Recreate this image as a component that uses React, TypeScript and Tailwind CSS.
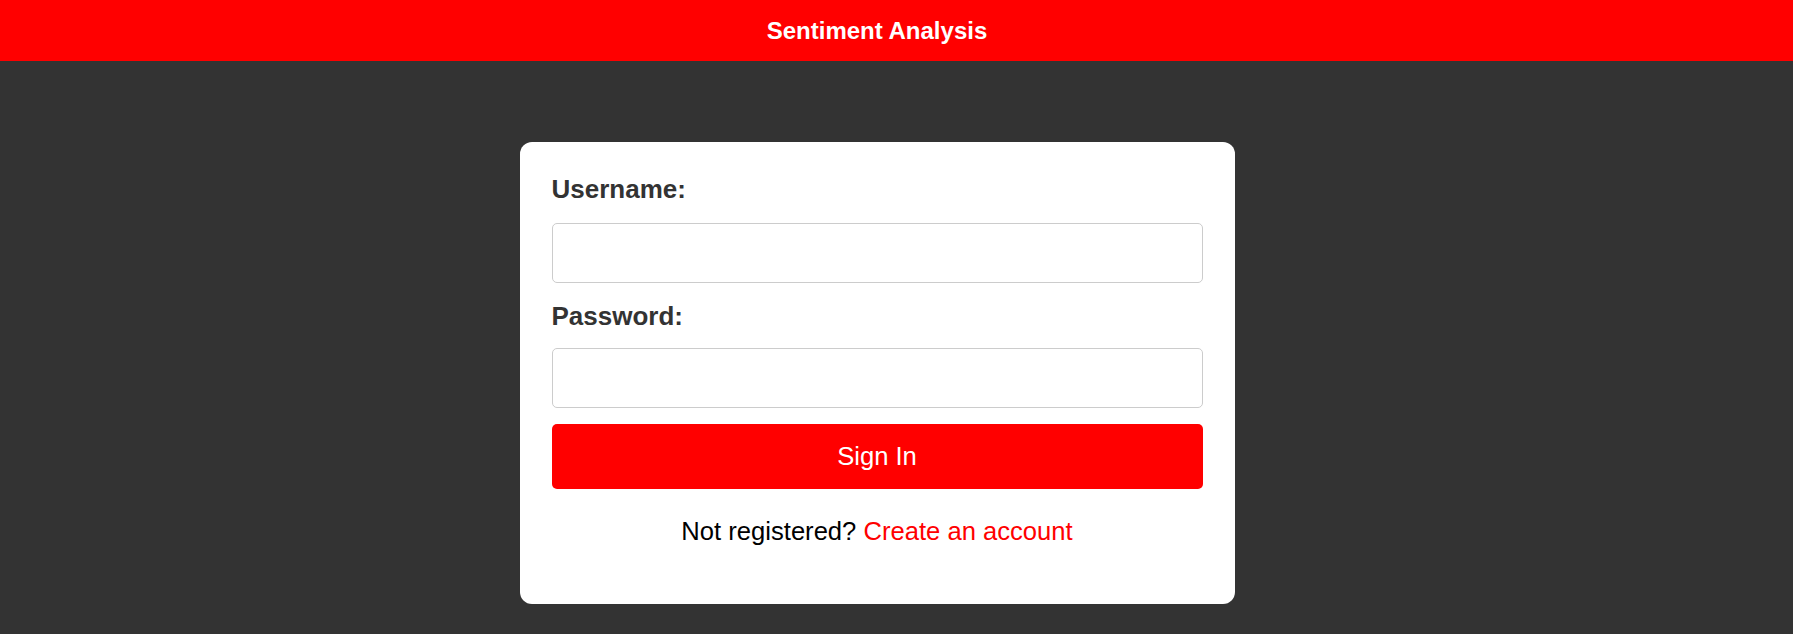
import React, { useState } from 'react';

const App: React.FC = () => {
  const [username, setUsername] = useState<string>('');
  const [password, setPassword] = useState<string>('');

  const handleSubmit = (e: React.FormEvent<HTMLFormElement>) => {
    e.preventDefault();
  };

  return (
    <div className="min-h-screen bg-[#333333] font-['Liberation_Sans',Arial,sans-serif]">
      <header className="flex h-[61px] items-center justify-center bg-[#ff0000] pr-[39px]">
        <h1 className="text-[24px] font-bold leading-[29px] text-white">
          Sentiment Analysis
        </h1>
      </header>
      <main className="flex justify-center pt-[81px] pr-[39px]">
        <form
          onSubmit={handleSubmit}
          className="w-[715px] rounded-[12px] bg-white px-[32px] pt-[32px] pb-[58px]"
        >
          <label
            htmlFor="username"
            className="mb-[19px] block text-[26px] font-bold leading-[30px] text-[#333333]"
          >
            Username:
          </label>
          <input
            id="username"
            type="text"
            value={username}
            onChange={(e) => setUsername(e.target.value)}
            className="block h-[60px] w-full rounded-[5px] border border-[#cccccc] px-3 text-[20px] outline-none"
          />
          <label
            htmlFor="password"
            className="mt-[18px] mb-[17px] block text-[26px] font-bold leading-[30px] text-[#333333]"
          >
            Password:
          </label>
          <input
            id="password"
            type="password"
            value={password}
            onChange={(e) => setPassword(e.target.value)}
            className="block h-[60px] w-full rounded-[5px] border border-[#cccccc] px-3 text-[20px] outline-none"
          />
          <button
            type="submit"
            className="mt-[16px] block h-[65px] w-full rounded-[5px] bg-[#ff0000] text-[25.6px] leading-[29px] text-white"
          >
            Sign In
          </button>
          <p className="mt-[28px] text-center text-[25.6px] leading-[29px] text-black">
            Not registered?{' '}
            <a href="#" className="text-[#ff0000]">
              Create an account
            </a>
          </p>
        </form>
      </main>
    </div>
  );
};

export default App;
